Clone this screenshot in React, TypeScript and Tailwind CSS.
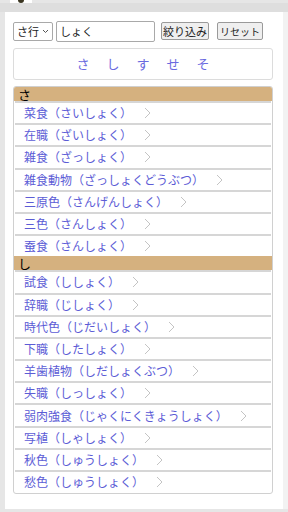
import React from 'react';

const saRows = [
  '菜食（さいしょく）',
  '在職（ざいしょく）',
  '雑食（ざっしょく）',
  '雑食動物（ざっしょくどうぶつ）',
  '三原色（さんげんしょく）',
  '三色（さんしょく）',
  '蚕食（さんしょく）',
];

const shiRows = [
  '試食（ししょく）',
  '辞職（じしょく）',
  '時代色（じだいしょく）',
  '下職（したしょく）',
  '羊歯植物（しだしょくぶつ）',
  '失職（しっしょく）',
  '弱肉強食（じゃくにくきょうしょく）',
  '写植（しゃしょく）',
  '秋色（しゅうしょく）',
  '愁色（しゅうしょく）',
];

const Chevron = () => (
  <svg width="7" height="12" viewBox="0 0 7 12" className="ml-[12px] shrink-0">
    <polyline points="1,1 6,6 1,11" fill="none" stroke="#c4c4c4" strokeWidth="1" />
  </svg>
);

const Row = ({ text }: { text: string }) => (
  <div className="mx-[1px] h-[22.2px] border-t-2 border-[#d6d6d6] flex items-center pl-[9px]">
    <span className="text-[12px] text-[#5c5cd6] whitespace-nowrap">{text}</span>
    <Chevron />
  </div>
);

const Header = ({ label, top }: { label: string; top?: boolean }) => (
  <div className={`h-[14px] bg-[#d5b17f] text-[13px] leading-[15px] text-black pl-[4px] ${top ? 'rounded-t-[2px]' : ''}`}>
    {label}
  </div>
);

const App = () => {
  return (
    <div
      className="w-[288px] h-[512px] bg-[#e6e6e6] overflow-hidden relative"
      style={{ fontFamily: '"Noto Sans CJK JP", "Noto Sans", sans-serif' }}
    >
      {/* logo strip */}
      <div className="h-[3px] flex">
        <div className="ml-[10px] w-[22px] h-[3px] bg-white flex justify-center">
          <div className="w-[6px] h-[3px] bg-[#3a3520] rounded-b-full" />
        </div>
      </div>
      <div className="h-[9px] bg-[#dedede]" />

      <div className="mx-[5px] w-[278px] h-[497px] bg-white px-[8px] pt-[8px]">
        {/* controls */}
        <div className="flex items-center h-[22px]">
          <div className="w-[40px] h-[19px] border border-[#a9a9a9] rounded-[2px] flex items-center justify-between px-[3px] text-[11px] text-[#222]">
            <span>さ行</span>
            <svg width="7" height="5" viewBox="0 0 7 5">
              <polyline points="1,1 3.5,3.5 6,1" fill="none" stroke="#555" strokeWidth="1" />
            </svg>
          </div>
          <div className="ml-[3px] w-[99px] h-[21px] border border-[#a9a9a9] rounded-[2px] flex items-center px-[3px] text-[11px] text-[#222]">
            しょく
          </div>
          <div className="ml-[6px] w-[48px] h-[18px] border border-[#9a9a9a] rounded-[2px] bg-[#efefef] flex items-center justify-center text-[11px] text-[#222]">
            絞り込み
          </div>
          <div className="ml-[8px] w-[46px] h-[18px] border border-[#9a9a9a] rounded-[2px] bg-[#efefef] flex items-center justify-center text-[10px] text-[#222]">
            リセット
          </div>
        </div>

        {/* kana index */}
        <div className="mt-[6px] w-[260px] h-[32px] border border-[#dcdcdc] rounded-[3px] flex items-center justify-center gap-[17px] text-[13px] text-[#6a6ae0]">
          <span>さ</span>
          <span>し</span>
          <span>す</span>
          <span>せ</span>
          <span>そ</span>
        </div>

        {/* list */}
        <div className="mt-[6px] w-[260px] border border-[#d0d0d0] rounded-[3px] pb-[1px]">
          <Header label="さ" top />
          {saRows.map((r) => (
            <Row key={r} text={r} />
          ))}
          <Header label="し" />
          {shiRows.map((r, i) => (
            <Row key={i} text={r} />
          ))}
        </div>
      </div>
      <div className="absolute top-[12px] right-0 w-[5px] h-[497px] bg-[#f2f2f2]" />
    </div>
  );
};

export default App;
